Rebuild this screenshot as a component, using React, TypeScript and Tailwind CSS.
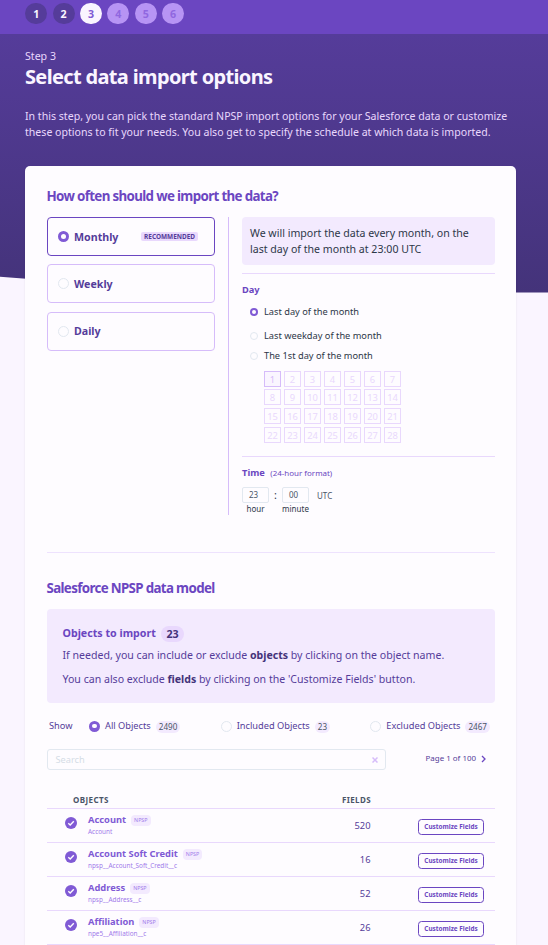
import clsx from "clsx";

const steps = [
  { n: 1, cls: "bg-[#553c9a] text-[#faf5ff]" },
  { n: 2, cls: "bg-[#553c9a] text-[#faf5ff]" },
  { n: 3, cls: "bg-[#faf5ff] text-[#805ad5]" },
  { n: 4, cls: "bg-[#b794f4] text-[#9067e0]" },
  { n: 5, cls: "bg-[#b794f4] text-[#9067e0]" },
  { n: 6, cls: "bg-[#b794f4] text-[#9067e0]" },
];

const objects = [
  { name: "Account", api: "Account", fields: 520 },
  { name: "Account Soft Credit", api: "npsp__Account_Soft_Credit__c", fields: 16 },
  { name: "Address", api: "npsp__Address__c", fields: 52 },
  { name: "Affiliation", api: "npe5__Affiliation__c", fields: 26 },
];

const days = Array.from({ length: 28 }, (_, i) => i + 1);

function Radio({ checked, small }: { checked?: boolean; small?: boolean }) {
  return (
    <span
      className={clsx(
        "flex shrink-0 items-center justify-center rounded-full",
        small ? "size-[8px]" : "size-[11px]",
        checked ? "bg-[#805ad5]" : "border border-[#e2e8f0]",
      )}
    >
      {checked && (
        <span className={clsx("rounded-full bg-[#fefcff]", small ? "size-[3.5px]" : "size-[4.5px]")} />
      )}
    </span>
  );
}

function Frequency({ label, checked }: { label: string; checked?: boolean }) {
  return (
    <div
      className={clsx(
        "flex h-[39px] items-center rounded-[4px] border pr-4 pl-[10px] text-[10.67px] font-bold text-[#553c9a]",
        checked ? "border-[#6b46c1]" : "border-[#d6bcfa]",
      )}
    >
      <Radio checked={checked} />
      <span className="ml-[5px] leading-4">{label}</span>
      {checked && (
        <span className="ml-auto rounded-[2px] bg-[#e9d8fd] px-[3px] text-[6.45px] leading-[9px]">
          RECOMMENDED
        </span>
      )}
    </div>
  );
}

function DayOption({ label, checked }: { label: string; checked?: boolean }) {
  return (
    <div className="flex items-center gap-[6px] pl-2 text-[9.25px] leading-[14px] text-[#2d3748]">
      <Radio checked={checked} small />
      {label}
    </div>
  );
}

function Filter({ label, count, checked }: { label: string; count: string; checked?: boolean }) {
  return (
    <div className="flex items-center text-[9.25px] text-[#553c9a]">
      <Radio checked={checked} />
      <span className="ml-[5px] leading-[14px]">{label}</span>
      <span className="mt-px ml-[5px] rounded-full bg-[#f3eafe] px-[3px] text-[8.1px] leading-3 text-[#4a5568]">
        {count}
      </span>
    </div>
  );
}

function TimeField({ value, label }: { value: string; label: string }) {
  return (
    <div className="flex w-[27px] flex-col items-center">
      <span className="h-4 w-full rounded-[2px] border border-[#e2e8f0] pl-[6px] text-[8px] leading-[14px] text-[#4a5568]">
        {value}
      </span>
      <span className="text-[8px] leading-3 text-[#2d3748]">{label}</span>
    </div>
  );
}

function ObjectRow({ name, api, fields }: { name: string; api: string; fields: number }) {
  return (
    <div className="flex h-[34px] border-b border-[#e9d8fd]">
      <svg viewBox="0 0 12 12" className="mt-2 ml-[18px] size-3">
        <circle cx="6" cy="6" r="6" fill="#805ad5" />
        <path d="M3.3 6.2 5.2 8 8.8 4.3" fill="none" stroke="#fefcff" strokeWidth="1.4" />
      </svg>
      <div className="ml-[11px] w-[190px]">
        <div className="mt-1 flex h-[14px] items-center gap-[5px]">
          <span className="text-[9.33px] leading-[14px] font-bold text-[#805ad5]">{name}</span>
          <span className="mt-px rounded-[4px] bg-[#f3eafe] px-[3px] text-[5.33px] leading-[11px] text-[#9f7aea]">
            NPSP
          </span>
        </div>
        <div className="text-[6.38px] leading-[10px] text-[#9f7aea]">{api}</div>
      </div>
      <div className="mt-[10px] ml-auto text-[9.33px] leading-[14px] text-[#553c9a]">{fields}</div>
      <button className="mt-[10px] mr-[11px] ml-[47.5px] h-4 w-[66px] rounded-[3.5px] border border-[#6b46c1] text-[6.4px] leading-[14px] font-bold whitespace-nowrap text-[#6b46c1]">
        Customize Fields
      </button>
    </div>
  );
}

export default function App() {
  return (
    <div className="grid h-[945px] grid-cols-[548px] overflow-hidden bg-[#faf5ff] font-['Noto_Sans',sans-serif]">
      <svg viewBox="0 0 548 300" className="col-start-1 row-start-1 h-[300px] w-[548px]">
        <defs>
          <linearGradient id="hero" x1="0" y1="0" x2="0" y2="1">
            <stop offset="0" stopColor="#553c9a" />
            <stop offset="1" stopColor="#44337a" />
          </linearGradient>
        </defs>
        <path d="M0 34H548V292.5Q200 293 0 276.7Z" fill="url(#hero)" />
      </svg>

      <div className="z-10 col-start-1 row-start-1 flex flex-col">
        <header className="flex h-[34px] shrink-0 items-start gap-[5.4px] bg-[#6b46c1] pt-[3px] pl-[25.2px]">
          {steps.map((s) => (
            <span
              key={s.n}
              className={clsx(
                "flex h-[21px] w-[22px] items-center justify-center rounded-full text-[10.67px] font-bold",
                s.cls,
              )}
            >
              {s.n}
            </span>
          ))}
        </header>

        <section className="h-[132px] shrink-0 px-[25px] pt-[14px] text-[#e9d8fd]">
          <p className="text-[10.6px] leading-4">Step 3</p>
          <h1 className="text-[20px] leading-[26px] font-bold tracking-[-0.65px] text-[#faf5ff]">
            Select data import options
          </h1>
          <p className="mt-[18px] text-[10.58px] leading-4 whitespace-nowrap">
            In this step, you can pick the standard NPSP import options for your Salesforce data or customize
            <br />
            these options to fit your needs. You also get to specify the schedule at which data is imported.
          </p>
        </section>

        <main className="ml-[25px] h-[800px] w-[491px] shrink-0 rounded-[5px] bg-[#fefcff] pt-5 pr-[21px] pl-[22px] shadow-[0_1px_2px_rgba(0,0,0,0.1)]">
          <h2 className="-ml-[0.5px] text-[13.33px] leading-5 font-bold tracking-[-0.65px] text-[#6b46c1]">
            How often should we import the data?
          </h2>

          <div className="mt-[11px] flex h-[298px]">
            <div className="flex w-[168px] flex-col gap-[8.3px]">
              <Frequency label="Monthly" checked />
              <Frequency label="Weekly" />
              <Frequency label="Daily" />
            </div>
            <div className="ml-[13px] flex-1 border-l border-[#d6bcfa] pl-[13px]">
              <p className="h-12 rounded-[4px] bg-[#f3eafe] px-2 pt-2 text-[10.6px] leading-4 text-[#2d3748]">
                We will import the data every month, on the last day of the month at 23:00 UTC
              </p>
              <div className="mt-2 h-[183px] border-t border-[#e9d8fd] pt-[9px]">
                <h3 className="text-[9.25px] leading-[14px] font-bold text-[#6b46c1]">Day</h3>
                <div className="mt-2 flex flex-col">
                  <DayOption label="Last day of the month" checked />
                  <div className="mt-[10px]">
                    <DayOption label="Last weekday of the month" />
                  </div>
                  <div className="mt-[6.4px]">
                    <DayOption label="The 1st day of the month" />
                  </div>
                </div>
                <div className="mt-[7.3px] ml-[22px] grid w-[137px] grid-cols-7 gap-x-[3px] gap-y-[2.7px]">
                  {days.map((d) => (
                    <span
                      key={d}
                      className={clsx(
                        "h-4 border text-center text-[9.33px] leading-[15px]",
                        d === 1 ? "border-[#d6bcfa] bg-[#faf5ff] text-[#d6bcfa]" : "border-[#e9d8fd] text-[#e9d8fd]",
                      )}
                    >
                      {d}
                    </span>
                  ))}
                </div>
              </div>
              <div className="border-t border-[#e9d8fd] pt-[9px]">
                <div className="flex items-center gap-[5.5px] text-[#6b46c1]">
                  <h3 className="text-[9.33px] leading-[14px] font-bold">Time</h3>
                  <span className="-mt-px text-[7.95px] leading-3">(24-hour format)</span>
                </div>
                <div className="mt-[7px] flex text-[#2d3748]">
                  <TimeField value="23" label="hour" />
                  <span className="w-[13px] text-center text-[10.67px] leading-4">:</span>
                  <TimeField value="00" label="minute" />
                  <span className="mt-[3px] ml-2 text-[8px] leading-3 text-[#4a5568]">UTC</span>
                </div>
              </div>
            </div>
          </div>

          <hr className="mt-[37px] border-[#eee2fe]" />
          <h2 className="mt-[25px] -ml-[0.5px] text-[13.33px] leading-5 font-bold tracking-[-0.65px] text-[#6b46c1]">
            Salesforce NPSP data model
          </h2>

          <div className="mt-[11px] h-[94px] rounded-[4px] bg-[#f3eafe] pt-4 pl-[15.5px] text-[10.59px] text-[#553c9a]">
            <div className="flex h-4 items-center gap-[5px]">
              <h3 className="text-[10.67px] leading-4 font-bold text-[#6b46c1]">Objects to import</h3>
              <span className="mt-[2px] rounded-full bg-[#e9d8fd] px-[5.5px] text-[10.67px] leading-4 font-bold text-[#44337a]">
                23
              </span>
            </div>
            <p className="mt-[6px] leading-4">
              If needed, you can include or exclude <b className="text-[#44337a]">objects</b> by clicking on the
              object name.
            </p>
            <p className="mt-2 leading-4">
              You can also exclude <b className="text-[#44337a]">fields</b> by clicking on the 'Customize Fields'
              button.
            </p>
          </div>

          <div className="mt-4 flex h-[14px] items-center justify-between pr-[5px] pl-[2px]">
            <div className="flex items-center gap-[16.5px] text-[9.25px] leading-[14px] text-[#553c9a]">
              Show
              <Filter label="All Objects" count="2490" checked />
            </div>
            <Filter label="Included Objects" count="23" />
            <Filter label="Excluded Objects" count="2467" />
          </div>

          <div className="mt-4 flex h-[21px] items-center">
            <div className="flex h-[21px] w-[339px] items-center justify-between rounded-[3px] border border-[#e2e8f0] pr-[7px] pl-[7.5px] text-[9.2px] text-[#d5dce6]">
              Search
              <svg viewBox="0 0 6 6" className="size-[6px]">
                <path d="M.5.5l5 5M5.5 .5l-5 5" stroke="#d6bcfa" strokeWidth="1.5" />
              </svg>
            </div>
            <span className="mb-[3px] ml-auto text-[7.95px] leading-3 text-[#553c9a]">Page 1 of 100</span>
            <svg viewBox="0 0 5 8" className="mr-[9px] mb-[2px] ml-[5px] h-2 w-[5px]">
              <path d="M1 1l3 3-3 3" fill="none" stroke="#6b46c1" strokeWidth="1.3" />
            </svg>
          </div>

          <div className="mt-6 flex h-[15px] border-b border-[#e9d8fd] text-[8px] leading-3 font-bold tracking-[0.4px] text-[#4a5568]">
            <span className="ml-[26px]">OBJECTS</span>
            <span className="mr-[124px] ml-auto">FIELDS</span>
          </div>
          {objects.map((o) => (
            <ObjectRow key={o.name} {...o} />
          ))}
        </main>
      </div>
    </div>
  );
}
